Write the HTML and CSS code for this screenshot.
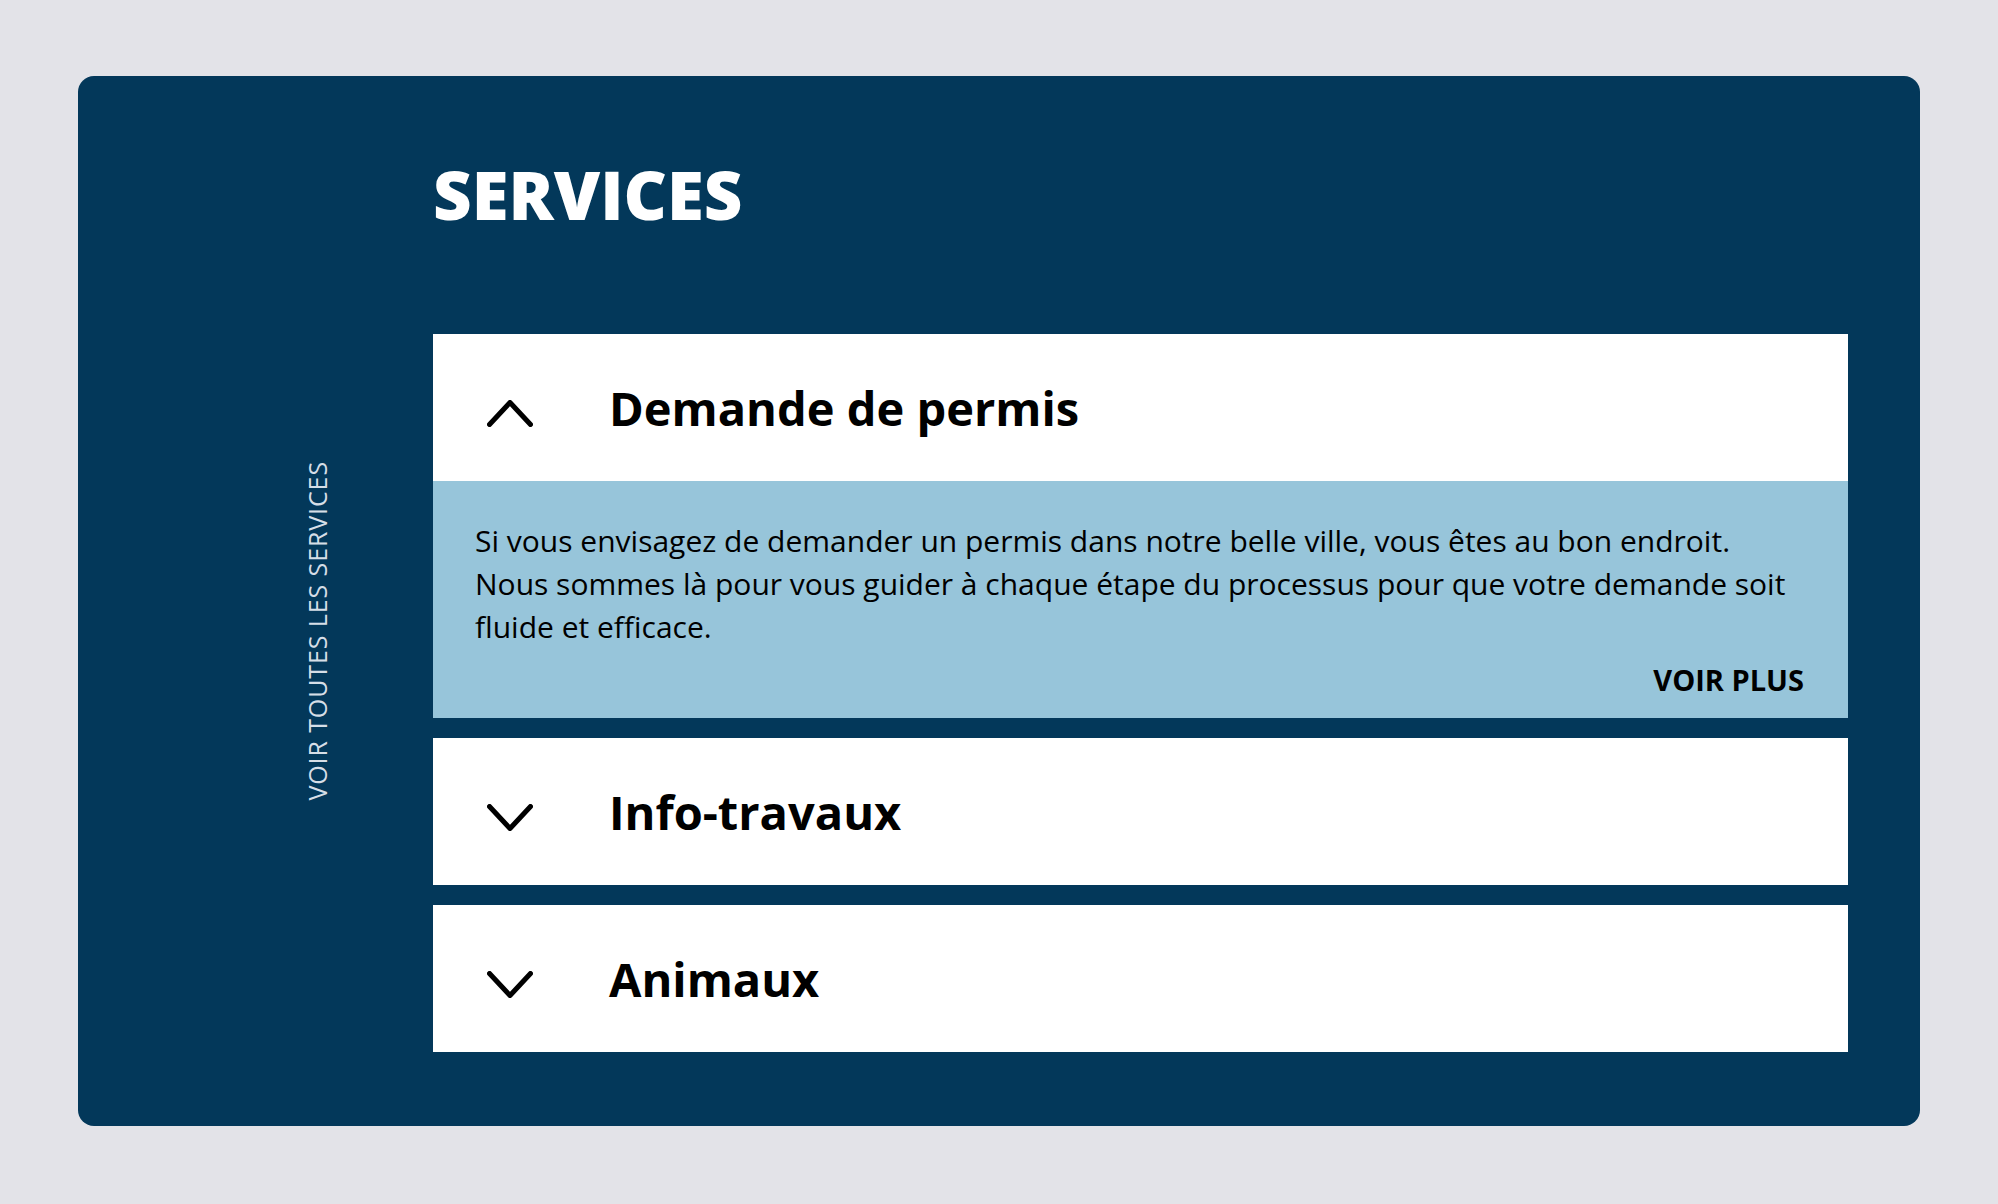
FILE: index.html
```html
<!DOCTYPE html>
<html lang="fr">
<head>
    <meta charset="UTF-8">
    <meta name="viewport" content="width=device-width, initial-scale=1.0">
    <title>Services</title>
    <link rel="stylesheet" href="styles.css">
</head>
<body>
    <section class="services">
        <div class="services-side">
            <a href="#" class="see-all">Voir toutes les services</a>
        </div>

        <div class="services-main">
            <h2 class="services-title">SERVICES</h2>

            <div class="accordion">
                <div class="acc-item open">
                    <button class="acc-head">
                        <svg class="chevron" width="46" height="27" viewBox="0 0 46 27">
                            <polyline points="2.5,24.5 23,2.5 43.5,24.5" />
                        </svg>
                        <span>Demande de permis</span>
                    </button>
                    <div class="acc-panel">
                        <p>Si vous envisagez de demander un permis dans notre belle ville, vous êtes au bon endroit. Nous sommes là pour vous guider à chaque étape du processus pour que votre demande soit fluide et efficace.</p>
                        <a href="#" class="more">VOIR PLUS</a>
                    </div>
                </div>

                <div class="acc-item">
                    <button class="acc-head">
                        <svg class="chevron" width="46" height="27" viewBox="0 0 46 27">
                            <polyline points="2.5,2.5 23,24.5 43.5,2.5" />
                        </svg>
                        <span>Info-travaux</span>
                    </button>
                </div>

                <div class="acc-item">
                    <button class="acc-head">
                        <svg class="chevron" width="46" height="27" viewBox="0 0 46 27">
                            <polyline points="2.5,2.5 23,24.5 43.5,2.5" />
                        </svg>
                        <span>Animaux</span>
                    </button>
                </div>
            </div>
        </div>
    </section>
</body>
</html>
```

FILE: styles.css
```css
body {
    font-family: "Open Sans", "Noto Sans", sans-serif;
    margin: 0;
    padding: 76px 78px 78px;
    background-color: #e3e3e8;
}

.services {
    display: flex;
    background-color: #03385a;
    border-radius: 16px;
    padding: 72px 72px 74px;
}

.services-side {
    width: 283px;
    flex-shrink: 0;
    padding-top: 313px;
    padding-left: 150px;
    box-sizing: border-box;
}

.see-all {
    display: block;
    writing-mode: vertical-rl;
    transform: rotate(180deg);
    color: #d6dee7;
    text-decoration: none;
    text-transform: uppercase;
    font-size: 25px;
    letter-spacing: 0.9px;
    line-height: 34px;
}

.services-main {
    flex: 1;
}

.services-title {
    margin: 0 0 94px;
    color: #fff;
    font-size: 67px;
    font-weight: 800;
    line-height: normal;
}

.accordion {
    display: flex;
    flex-direction: column;
    gap: 20px;
}

.acc-item {
    background-color: #fff;
}

.acc-head {
    display: flex;
    align-items: center;
    width: 100%;
    height: 147px;
    padding: 0 0 0 54px;
    border: 0;
    background: none;
    font-family: inherit;
    font-size: 47px;
    font-weight: 700;
    color: #000;
    text-align: left;
    cursor: pointer;
}

.chevron {
    flex-shrink: 0;
    margin-right: 76px;
    margin-top: 12px;
    fill: none;
    stroke: #000;
    stroke-width: 5;
    stroke-linecap: round;
    stroke-linejoin: round;
}

.acc-panel {
    background-color: #97c5da;
    padding: 38px 44px 17px 42px;
}

.acc-panel p {
    margin: 0;
    font-size: 30px;
    line-height: 43px;
    color: #000;
}

.more {
    display: block;
    margin-top: 11px;
    text-align: right;
    font-size: 29px;
    font-weight: 700;
    line-height: 42px;
    color: #000;
    text-decoration: none;
}
```
